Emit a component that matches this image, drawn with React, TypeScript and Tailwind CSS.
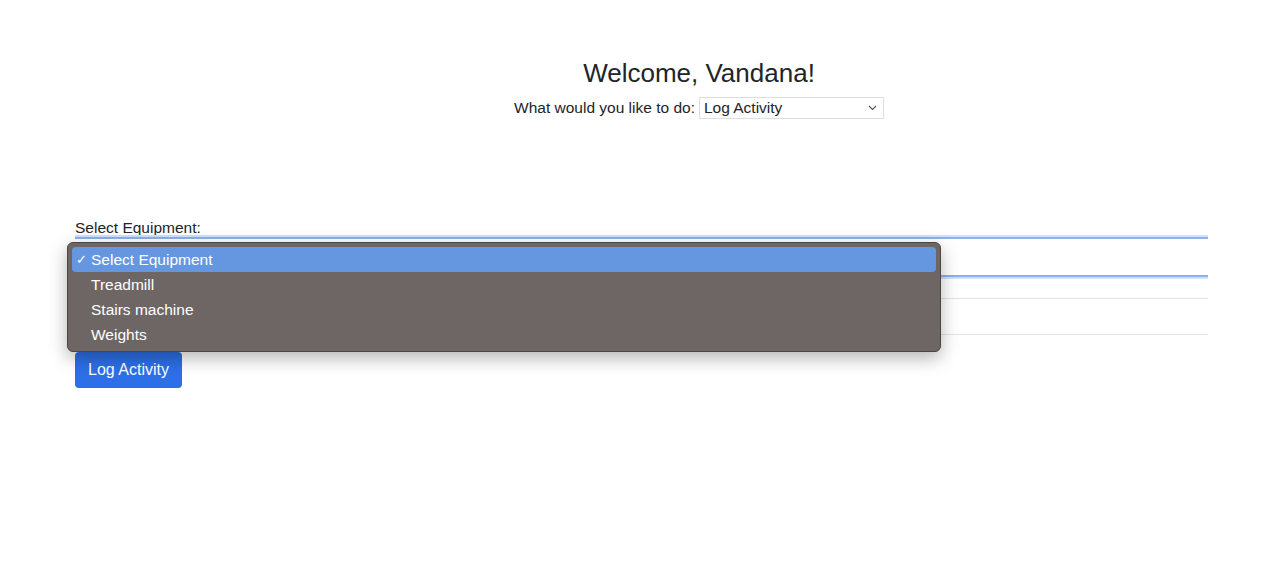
import { useState } from 'react'

const equipment = ['Select Equipment', 'Treadmill', 'Stairs machine', 'Weights']

const App = () => {
   const [action, setAction] = useState('Log Activity')
   const [selected] = useState('Select Equipment')

   return (
      <div className="min-h-screen bg-white font-['Liberation_Sans',Arial,sans-serif] text-[#212529]">
         {/* Header */}
         <div className="flex flex-col items-center pl-[114px] pt-[57px]">
            <h1 className="text-[26px] leading-[32px]">Welcome, Vandana!</h1>
            <div className="mt-[7px] flex items-center gap-[4px] text-[15.5px]">
               <span>What would you like to do:</span>
               <div className="relative flex h-[22px] w-[185px] items-center border border-[#dedede] bg-white pl-[4px]">
                  <span>{action}</span>
                  <svg
                     className="absolute right-[6px] top-[7px]"
                     width="9"
                     height="6"
                     viewBox="0 0 9 6"
                     fill="none"
                     stroke="#555"
                     strokeWidth="1.1"
                     onClick={() => setAction('Log Activity')}
                  >
                     <path d="M1 1l3.5 3.5L8 1" />
                  </svg>
               </div>
            </div>
         </div>

         {/* Form */}
         <div className="pl-[75px] pr-[76px] pt-[100px]">
            <label className="block text-[15.5px] leading-[17px]">Select Equipment:</label>
            <div className="relative mt-[1px]">
               <div className="h-[40px] border-y-[2px] border-[#8fb0ea] shadow-[0_-2px_0_#d3e0fa,0_2px_0_#d3e0fa]" />
               <div className="absolute left-[-8px] top-[5px] z-10 w-[874px] rounded-[6px] border border-[#4b4544] bg-[#6d6665] p-[4px] shadow-[0_6px_18px_rgba(0,0,0,0.3)]">
                  {equipment.map((item) => (
                     <div
                        key={item}
                        className={
                           item === selected
                              ? 'flex h-[25px] items-center rounded-[4px] bg-[#6597e1] pl-[4px] text-[15.5px] text-white'
                              : 'flex h-[25px] items-center pl-[19px] text-[15.5px] text-white'
                        }
                     >
                        {item === selected && <span className="mr-[4px] text-[13px]">✓</span>}
                        {item}
                     </div>
                  ))}
               </div>
            </div>
            <div className="h-[21px]" />
            <div className="h-[37px] border-y border-[#e3e3e3]" />
            <button className="mt-[17px] h-[36px] rounded-[4px] bg-[#2d6fe7] px-[13px] text-[16px] text-white">
               Log Activity
            </button>
         </div>
      </div>
   )
}

export default App
